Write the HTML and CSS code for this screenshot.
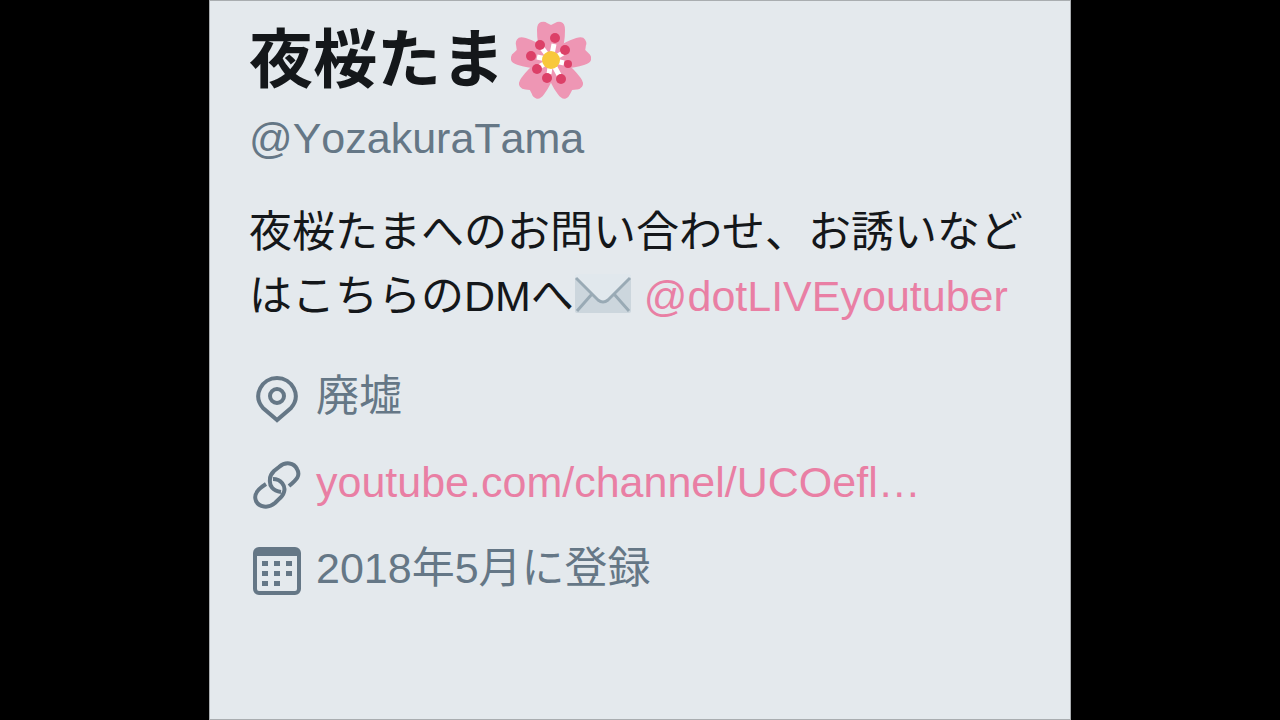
FILE: index.html
```html
<!DOCTYPE html>
<html lang="ja">
	<head>
		<meta charset="UTF-8" />
		<meta name="viewport" content="width=device-width, initial-scale=1.0" />
		<title>夜桜たま</title>
		<link rel="stylesheet" href="styles.css">
	</head>

	<body>
		<main class="profile">
			<h1 class="name">
				<span>夜桜たま</span>
				<svg class="blossom" viewBox="0 0 80 80" aria-hidden="true">
					<defs>
						<path id="petal" d="M40 44C31 39 26 28 26 10Q26 3 30 2Q34 1 36 3L40 5L44 3Q47 1 50 2Q54 3 54 10C54 28 49 39 40 44Z" />
					</defs>
					<g fill="#ee96b4">
						<use href="#petal" />
						<use href="#petal" transform="rotate(72 40 41)" />
						<use href="#petal" transform="rotate(144 40 41)" />
						<use href="#petal" transform="rotate(216 40 41)" />
						<use href="#petal" transform="rotate(288 40 41)" />
					</g>
					<path class="stamens" d="M40 40L43 24M40 40L52 33M40 40L53 43M40 40L48 55M40 40L38 54M40 40L28 47M40 40L26 37M40 40L31 28" />
					<g fill="#dc4068">
						<circle cx="44" cy="18" r="5" />
						<circle cx="54" cy="30" r="5" />
						<circle cx="57" cy="44" r="4" />
						<circle cx="50" cy="59" r="5" />
						<circle cx="36" cy="58" r="5" />
						<circle cx="26" cy="49" r="5" />
						<circle cx="20" cy="36" r="5" />
						<circle cx="29" cy="25" r="5" />
					</g>
					<circle cx="40" cy="40" r="9" fill="#f8c83c" />
				</svg>
			</h1>
			<p class="handle">@YozakuraTama</p>

			<p class="bio">
				夜桜たまへのお問い合わせ、お誘いなどはこちらのDMへ<svg class="envelope" viewBox="0 0 56 40" aria-hidden="true">
					<rect y="1" width="56" height="38" rx="2" fill="#ccd6dd" />
					<path d="M0 3Q0 0 3 0H53Q56 0 56 3L33 26Q28 30 23 26Z" fill="#e1e8ed" />
					<path class="fold" d="M1 4L23 26Q28 30 33 26L55 4M2 37L17 20M54 37L39 20" />
				</svg>
				<a href="#dotLIVEyoutuber">@dotLIVEyoutuber</a>
			</p>

			<ul class="details">
				<li>
					<svg class="icon" viewBox="0 0 48 48" aria-hidden="true">
						<path d="M24 45L10 33C-1 20 9 3 24 3S49 20 38 33Z" />
						<circle cx="24" cy="21" r="7" />
					</svg>
					<span>廃墟</span>
				</li>
				<li>
					<svg class="icon" viewBox="0 0 48 48" aria-hidden="true">
						<path d="M28 31C20 30 16 25 17 18Q17 14 21 10L26 6C33 0 41 2 44 8C48 15 43 19 36 25" />
						<path d="M20 18C28 18 33 25 31 31Q30 35 25 39L22 42C15 48 6 46 3 40C0 33 5 28 13 23" />
					</svg>
					<a href="#channel">youtube.com/channel/UCOefl…</a>
				</li>
				<li>
					<svg class="icon" viewBox="0 0 48 48" aria-hidden="true">
						<rect x="2" y="2" width="44" height="44" rx="4" />
						<path class="solid" d="M2 5Q2 2 5 2H43Q46 2 46 5V9H2Z" />
						<path class="solid" d="M9 14h6v5h-6zM21 14h6v5h-6zM33 14h6v5h-6zM9 24h6v5h-6zM21 24h6v5h-6zM33 24h6v5h-6zM9 34h6v5h-6zM21 34h6v5h-6z" />
					</svg>
					<span>2018年5月に登録</span>
				</li>
			</ul>
		</main>
	</body>
</html>
```

FILE: styles.css
```css
:root {
	--bg-color:   #e4e9ed;
	--fg-color:   #14171a;
	--fg-muted:   #657786;
	--link-color: #e97fa4;
}

* {
	box-sizing: border-box;
}

body {
	margin: 0;
	background: #000;
	color: var(--fg-color);
	font-family: "Liberation Sans", "Noto Sans CJK JP", sans-serif;
	font-size: 43px;
	font-kerning: none;
	line-height: 64px;
}

a {
	color: var(--link-color);
	text-decoration: none;
}
a:hover {
	text-decoration: underline;
}

.profile {
	max-width: 862px;
	min-height: 100vh;
	margin: 0 auto;
	padding: 19px 39px;
	background: var(--bg-color);
	border: 1px solid #a9adb0;
}

.name {
	display: flex;
	align-items: center;
	gap: 6px;
	margin: 0;
	font-size: 64px;
	line-height: 80px;
}
.blossom {
	width: 80px;
	height: 80px;
}
.stamens {
	fill: none;
	stroke: #fff;
	stroke-width: 5;
}

.handle {
	margin: 6px 0 30px;
	color: var(--fg-muted);
}

.bio {
	margin: 0;
}
.envelope {
	width: 56px;
	height: 40px;
	margin: 0 1px;
	vertical-align: -3px;
}
.fold {
	fill: none;
	stroke: #99aab5;
	stroke-width: 3;
}

.details {
	display: flex;
	flex-direction: column;
	gap: 22px;
	margin: 36px 0 0;
	padding: 0 4px;
	list-style: none;
	color: var(--fg-muted);
}
.details li {
	display: flex;
	align-items: center;
	gap: 15px;
}
.icon {
	flex-shrink: 0;
	width: 48px;
	height: 54px;
	padding-top: 6px;
	fill: none;
	stroke: var(--fg-muted);
	stroke-width: 4;
}
.solid {
	fill: var(--fg-muted);
	stroke: none;
}
```
